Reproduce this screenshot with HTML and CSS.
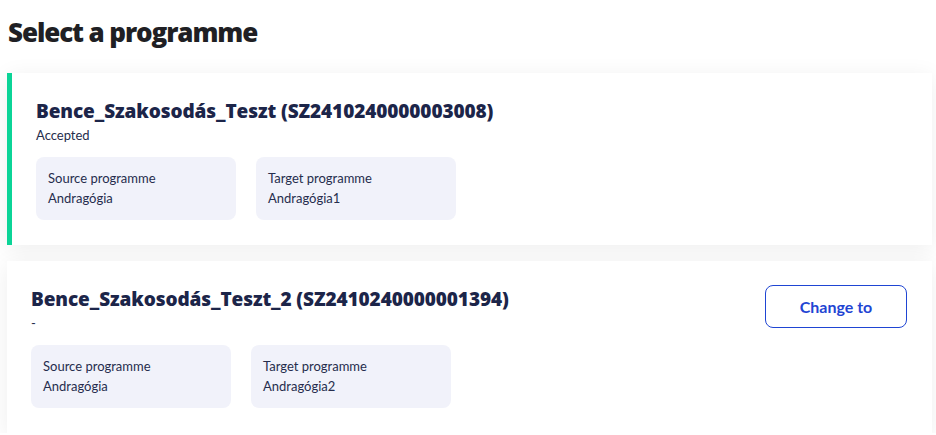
FILE: index.html
```html
<!DOCTYPE html>
<html lang="en">
<head>
<meta charset="utf-8">
<title>Select a programme</title>
<link rel="stylesheet" href="styles.css">
</head>
<body>
<main class="page">
  <h1 class="page-title">Select a programme</h1>
  <div class="cards">
    <section class="card card--active">
      <div class="card-main">
        <h2 class="card-title">Bence_Szakosodás_Teszt (SZ2410240000003008)</h2>
        <div class="card-status">Accepted</div>
        <div class="info-row">
          <div class="info-box">
            <div class="info-label">Source programme</div>
            <div class="info-value">Andragógia</div>
          </div>
          <div class="info-box">
            <div class="info-label">Target programme</div>
            <div class="info-value">Andragógia1</div>
          </div>
        </div>
      </div>
    </section>
    <section class="card">
      <div class="card-main">
        <h2 class="card-title">Bence_Szakosodás_Teszt_2 (SZ2410240000001394)</h2>
        <div class="card-status">-</div>
        <div class="info-row">
          <div class="info-box">
            <div class="info-label">Source programme</div>
            <div class="info-value">Andragógia</div>
          </div>
          <div class="info-box">
            <div class="info-label">Target programme</div>
            <div class="info-value">Andragógia2</div>
          </div>
        </div>
      </div>
      <button class="btn-outline" type="button">Change to</button>
    </section>
  </div>
</main>
</body>
</html>
```

FILE: styles.css
```css
* { box-sizing: border-box; }
html, body { margin: 0; padding: 0; background: #ffffff; }
body {
  font-family: Lato, "Liberation Sans", sans-serif;
  color: #262d4d;
}
.page {
  padding: 15px 4px 0 7px;
}
.page-title {
  margin: -1px 0 23px 1px;
  font-family: "Open Sans", "Liberation Sans", sans-serif;
  font-weight: 800;
  font-size: 26px;
  line-height: 36px;
  color: #1f1f24;
  letter-spacing: -1.1px;
}
.cards {
  display: flex;
  flex-direction: column;
  gap: 16px;
}
.card {
  display: flex;
  align-items: flex-start;
  justify-content: space-between;
  background: #ffffff;
  padding: 24px 25px 25px 24px;
  box-shadow: 0 4px 22px rgba(0, 0, 0, 0.07);
}
.card--active {
  border-left: 5px solid #0bd497;
}
.card-title {
  margin: 0;
  font-family: "Open Sans", "Liberation Sans", sans-serif;
  font-weight: 800;
  font-size: 19px;
  line-height: 28px;
  color: #1c2549;
  letter-spacing: -0.1px;
}
.card-status {
  font-size: 13px;
  line-height: 20px;
  color: #262d4d;
}
.info-row {
  display: flex;
  gap: 20px;
  margin-top: 12px;
}
.info-box {
  width: 200px;
  background: #f1f2fa;
  border-radius: 8px;
  padding: 11px 12px 12px;
}
.info-label, .info-value {
  font-size: 13px;
  line-height: 20px;
  color: #262d4d;
}
.btn-outline {
  width: 142px;
  height: 43px;
  background: #ffffff;
  border: 1px solid #1f45d3;
  border-radius: 8px;
  font-family: Lato, "Liberation Sans", sans-serif;
  font-weight: 700;
  font-size: 16px;
  color: #1f45d3;
  cursor: pointer;
  padding: 0;
}
```
